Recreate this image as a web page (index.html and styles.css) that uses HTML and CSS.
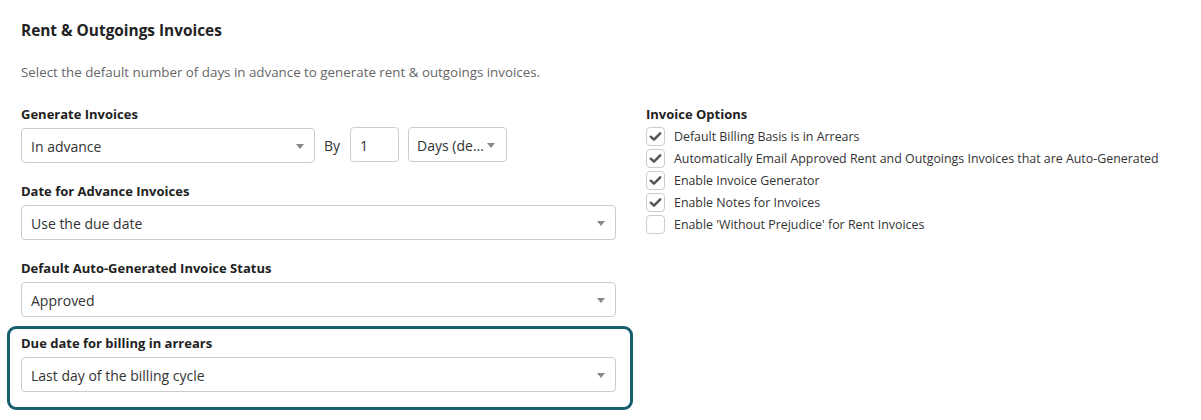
FILE: index.html
```html
<!DOCTYPE html>
<html lang="en">
<head>
<meta charset="utf-8">
<title>Rent &amp; Outgoings Invoices</title>
<link rel="stylesheet" href="styles.css">
</head>
<body>
<div class="page">
  <h2 class="title">Rent &amp; Outgoings Invoices</h2>
  <p class="subtitle">Select the default number of days in advance to generate rent &amp; outgoings invoices.</p>
  <div class="columns">
    <div class="left">
      <div class="group">
        <div class="label">Generate Invoices</div>
        <div class="inline-row">
          <div class="select select--mode"><span class="value">In advance</span><i class="caret"></i></div>
          <span class="by">By</span>
          <div class="input input--num">1</div>
          <div class="select select--unit"><span class="value">Days (de...</span><i class="caret"></i></div>
        </div>
      </div>
      <div class="group">
        <div class="label">Date for Advance Invoices</div>
        <div class="select"><span class="value">Use the due date</span><i class="caret"></i></div>
      </div>
      <div class="group">
        <div class="label">Default Auto-Generated Invoice Status</div>
        <div class="select"><span class="value">Approved</span><i class="caret"></i></div>
      </div>
      <div class="group group--highlight">
        <div class="label">Due date for billing in arrears</div>
        <div class="select"><span class="value">Last day of the billing cycle</span><i class="caret"></i></div>
      </div>
    </div>
    <div class="right">
      <div class="label">Invoice Options</div>
      <ul class="checks">
        <li class="check"><span class="box"><svg viewBox="0 0 18 18" class="tick"><path d="M4 9.2 L7.4 12.4 L14 5.6"/></svg></span>Default Billing Basis is in Arrears</li>
        <li class="check"><span class="box"><svg viewBox="0 0 18 18" class="tick"><path d="M4 9.2 L7.4 12.4 L14 5.6"/></svg></span>Automatically Email Approved Rent and Outgoings Invoices that are Auto-Generated</li>
        <li class="check"><span class="box"><svg viewBox="0 0 18 18" class="tick"><path d="M4 9.2 L7.4 12.4 L14 5.6"/></svg></span>Enable Invoice Generator</li>
        <li class="check"><span class="box"><svg viewBox="0 0 18 18" class="tick"><path d="M4 9.2 L7.4 12.4 L14 5.6"/></svg></span>Enable Notes for Invoices</li>
        <li class="check"><span class="box"></span>Enable 'Without Prejudice' for Rent Invoices</li>
      </ul>
    </div>
  </div>
</div>
</body>
</html>
```
FILE: styles.css
```css
html, body {
  margin: 0;
  padding: 0;
  background: #ffffff;
}

body {
  font-family: "Open Sans", "Liberation Sans", sans-serif;
  font-size: 13px;
  color: #333333;
}

.page {
  padding: 0 7px;
}

.title {
  margin: 21px 0 0 14px;
  font-size: 15.4px;
  line-height: 20px;
  font-weight: 700;
  color: #222222;
}

.subtitle {
  margin: 22px 0 15px 14px;
  font-size: 13.35px;
  line-height: 18px;
  color: #666666;
}

.columns {
  display: flex;
  gap: 13px;
  align-items: flex-start;
}

.left {
  width: 626px;
  display: flex;
  flex-direction: column;
}

.group {
  border: 3px solid transparent;
  border-radius: 9px;
  padding: 6px 14px 7px 11px;
}

.group--highlight {
  border-color: #175f6e;
  margin-top: -1px;
  padding-top: 5px;
  padding-bottom: 15px;
}

.label {
  font-weight: 700;
  font-size: 13px;
  line-height: 18px;
  color: #222222;
  margin-bottom: 5px;
}

.select,
.input {
  box-sizing: border-box;
  height: 35px;
  border: 1px solid #cccccc;
  border-radius: 4px;
  background: #ffffff;
  display: flex;
  align-items: center;
  gap: 4px;
  font-size: 14px;
  color: #333333;
  padding: 1px 9px 0;
}

.select .value {
  flex: 1;
  white-space: nowrap;
  overflow: hidden;
}

.caret {
  width: 0;
  height: 0;
  border-left: 4px solid transparent;
  border-right: 4px solid transparent;
  border-top: 5px solid #888888;
  margin-right: 1px;
}

.inline-row {
  display: flex;
  align-items: center;
}

.select--mode {
  width: 294px;
}

.by {
  margin: 0 10px 0 9px;
  font-size: 14px;
  color: #333333;
}

.input--num {
  width: 49px;
  margin-right: 9px;
  position: relative;
  top: -1px;
}

.select--unit {
  width: 99px;
  padding-left: 8px;
  padding-right: 10px;
  position: relative;
  top: -1px;
}

.right {
  padding-top: 9px;
  flex: 1;
}

.right .label {
  margin-bottom: 2px;
}

.checks {
  list-style: none;
  margin: 0;
  padding: 0;
}

.check {
  display: flex;
  align-items: center;
  height: 22px;
  font-size: 12.4px;
  color: #333333;
}

.box {
  box-sizing: border-box;
  width: 19px;
  height: 19px;
  border: 1px solid #cccccc;
  border-radius: 4px;
  margin-right: 9px;
  display: flex;
  align-items: center;
  justify-content: center;
  flex: none;
}

.tick {
  width: 17px;
  height: 17px;
}

.tick path {
  fill: none;
  stroke: #555555;
  stroke-width: 2.6;
  stroke-linecap: round;
  stroke-linejoin: round;
}
```
